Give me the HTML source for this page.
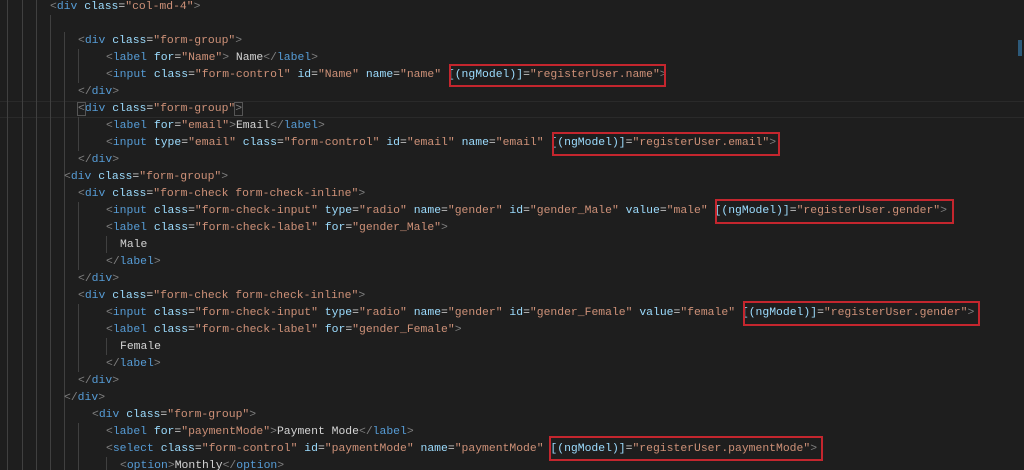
<!DOCTYPE html>
<html><head><meta charset="utf-8"><style>
html,body{margin:0;padding:0;background:#1e1e1e;width:1024px;height:470px;overflow:hidden;position:relative}
.l{position:absolute;white-space:pre;font-family:"Liberation Mono",monospace;font-size:11.4px;line-height:17px;height:17px;color:#d4d4d4}
.p{color:#808080}.t{color:#569cd6}.a{color:#9cdcfe}.s{color:#ce9178}
.g{position:absolute;width:1px;background:#404040}
.box{position:absolute;border:2px solid #c4262e;box-sizing:border-box}
.hl{position:absolute;left:0;width:1024px;border-top:1px solid #2a2a2a;border-bottom:1px solid #2a2a2a;height:15px}
</style></head><body>
<div class="hl" style="top:101px"></div>
<div class="g" style="left:7px;top:0;height:470px"></div>
<div class="g" style="left:22px;top:0;height:470px"></div>
<div class="g" style="left:36px;top:0;height:470px"></div>
<div class="g" style="left:50px;top:15px;height:455px"></div>
<div class="g" style="left:64px;top:32px;height:438px"></div>
<div class="g" style="left:78px;top:49px;height:34px"></div>
<div class="g" style="left:78px;top:117px;height:34px"></div>
<div class="g" style="left:78px;top:202px;height:68px"></div>
<div class="g" style="left:78px;top:304px;height:68px"></div>
<div class="g" style="left:78px;top:423px;height:47px"></div>
<div class="g" style="left:106px;top:236px;height:17px"></div>
<div class="g" style="left:106px;top:338px;height:17px"></div>
<div class="g" style="left:106px;top:457px;height:13px"></div>
<div class="g" style="left:1018px;top:40px;height:16px;background:#2d5a7a;width:4px"></div>

<div class="l" style="left:50px;top:-1px"><span class="p">&lt;</span><span class="t">div</span> <span class="a">class</span>=<span class="s">"col-md-4"</span><span class="p">&gt;</span></div>
<div class="l" style="left:78px;top:33px"><span class="p">&lt;</span><span class="t">div</span> <span class="a">class</span>=<span class="s">"form-group"</span><span class="p">&gt;</span></div>
<div class="l" style="left:106px;top:50px"><span class="p">&lt;</span><span class="t">label</span> <span class="a">for</span>=<span class="s">"Name"</span><span class="p">&gt;</span> Name<span class="p">&lt;/</span><span class="t">label</span><span class="p">&gt;</span></div>
<div class="l" style="left:106px;top:67px"><span class="p">&lt;</span><span class="t">input</span> <span class="a">class</span>=<span class="s">"form-control"</span> <span class="a">id</span>=<span class="s">"Name"</span> <span class="a">name</span>=<span class="s">"name"</span> <span class="a">[(ngModel)]</span>=<span class="s">"registerUser.name"</span><span class="p">&gt;</span></div>
<div class="l" style="left:78px;top:84px"><span class="p">&lt;/</span><span class="t">div</span><span class="p">&gt;</span></div>
<div class="l" style="left:78px;top:101px"><span class="p" style="outline:1px solid #555">&lt;</span><span class="t">div</span> <span class="a">class</span>=<span class="s">"form-group"</span><span class="p" style="outline:1px solid #555">&gt;</span></div>
<div class="l" style="left:106px;top:118px"><span class="p">&lt;</span><span class="t">label</span> <span class="a">for</span>=<span class="s">"email"</span><span class="p">&gt;</span>Email<span class="p">&lt;/</span><span class="t">label</span><span class="p">&gt;</span></div>
<div class="l" style="left:106px;top:135px"><span class="p">&lt;</span><span class="t">input</span> <span class="a">type</span>=<span class="s">"email"</span> <span class="a">class</span>=<span class="s">"form-control"</span> <span class="a">id</span>=<span class="s">"email"</span> <span class="a">name</span>=<span class="s">"email"</span> <span class="a">[(ngModel)]</span>=<span class="s">"registerUser.email"</span><span class="p">&gt;</span></div>
<div class="l" style="left:78px;top:152px"><span class="p">&lt;/</span><span class="t">div</span><span class="p">&gt;</span></div>
<div class="l" style="left:64px;top:169px"><span class="p">&lt;</span><span class="t">div</span> <span class="a">class</span>=<span class="s">"form-group"</span><span class="p">&gt;</span></div>
<div class="l" style="left:78px;top:186px"><span class="p">&lt;</span><span class="t">div</span> <span class="a">class</span>=<span class="s">"form-check form-check-inline"</span><span class="p">&gt;</span></div>
<div class="l" style="left:106px;top:203px"><span class="p">&lt;</span><span class="t">input</span> <span class="a">class</span>=<span class="s">"form-check-input"</span> <span class="a">type</span>=<span class="s">"radio"</span> <span class="a">name</span>=<span class="s">"gender"</span> <span class="a">id</span>=<span class="s">"gender_Male"</span> <span class="a">value</span>=<span class="s">"male"</span> <span class="a">[(ngModel)]</span>=<span class="s">"registerUser.gender"</span><span class="p">&gt;</span></div>
<div class="l" style="left:106px;top:220px"><span class="p">&lt;</span><span class="t">label</span> <span class="a">class</span>=<span class="s">"form-check-label"</span> <span class="a">for</span>=<span class="s">"gender_Male"</span><span class="p">&gt;</span></div>
<div class="l" style="left:120px;top:237px">Male</div>
<div class="l" style="left:106px;top:254px"><span class="p">&lt;/</span><span class="t">label</span><span class="p">&gt;</span></div>
<div class="l" style="left:78px;top:271px"><span class="p">&lt;/</span><span class="t">div</span><span class="p">&gt;</span></div>
<div class="l" style="left:78px;top:288px"><span class="p">&lt;</span><span class="t">div</span> <span class="a">class</span>=<span class="s">"form-check form-check-inline"</span><span class="p">&gt;</span></div>
<div class="l" style="left:106px;top:305px"><span class="p">&lt;</span><span class="t">input</span> <span class="a">class</span>=<span class="s">"form-check-input"</span> <span class="a">type</span>=<span class="s">"radio"</span> <span class="a">name</span>=<span class="s">"gender"</span> <span class="a">id</span>=<span class="s">"gender_Female"</span> <span class="a">value</span>=<span class="s">"female"</span> <span class="a">[(ngModel)]</span>=<span class="s">"registerUser.gender"</span><span class="p">&gt;</span></div>
<div class="l" style="left:106px;top:322px"><span class="p">&lt;</span><span class="t">label</span> <span class="a">class</span>=<span class="s">"form-check-label"</span> <span class="a">for</span>=<span class="s">"gender_Female"</span><span class="p">&gt;</span></div>
<div class="l" style="left:120px;top:339px">Female</div>
<div class="l" style="left:106px;top:356px"><span class="p">&lt;/</span><span class="t">label</span><span class="p">&gt;</span></div>
<div class="l" style="left:78px;top:373px"><span class="p">&lt;/</span><span class="t">div</span><span class="p">&gt;</span></div>
<div class="l" style="left:64px;top:390px"><span class="p">&lt;/</span><span class="t">div</span><span class="p">&gt;</span></div>
<div class="l" style="left:92px;top:407px"><span class="p">&lt;</span><span class="t">div</span> <span class="a">class</span>=<span class="s">"form-group"</span><span class="p">&gt;</span></div>
<div class="l" style="left:106px;top:424px"><span class="p">&lt;</span><span class="t">label</span> <span class="a">for</span>=<span class="s">"paymentMode"</span><span class="p">&gt;</span>Payment Mode<span class="p">&lt;/</span><span class="t">label</span><span class="p">&gt;</span></div>
<div class="l" style="left:106px;top:441px"><span class="p">&lt;</span><span class="t">select</span> <span class="a">class</span>=<span class="s">"form-control"</span> <span class="a">id</span>=<span class="s">"paymentMode"</span> <span class="a">name</span>=<span class="s">"paymentMode"</span> <span class="a">[(ngModel)]</span>=<span class="s">"registerUser.paymentMode"</span><span class="p">&gt;</span></div>
<div class="l" style="left:120px;top:458px"><span class="p">&lt;</span><span class="t">option</span><span class="p">&gt;</span>Monthly<span class="p">&lt;/</span><span class="t">option</span><span class="p">&gt;</span></div>

<div class="box" style="left:449px;top:64px;width:217px;height:23px"></div>
<div class="box" style="left:552px;top:132px;width:228px;height:24px"></div>
<div class="box" style="left:715px;top:199px;width:239px;height:25px"></div>
<div class="box" style="left:743px;top:301px;width:237px;height:25px"></div>
<div class="box" style="left:549px;top:436px;width:274px;height:25px"></div>
</body></html>
